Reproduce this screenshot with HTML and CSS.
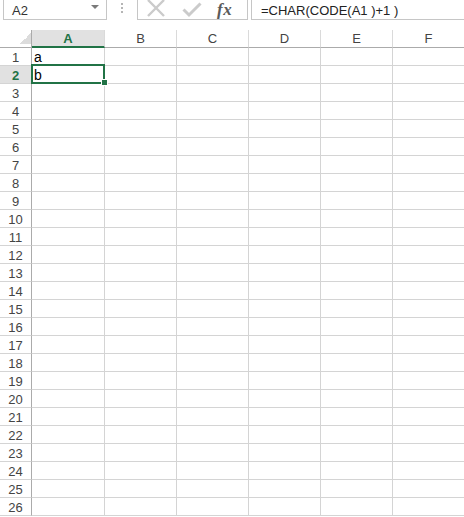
FILE: index.html
```html
<!DOCTYPE html>
<html>
<head>
<meta charset="utf-8">
<link rel="stylesheet" href="styles.css">
</head>
<body>
<div class="toolbar">
  <div class="namebox">
    <span class="name">A2</span>
    <svg class="drop" width="8" height="4" viewBox="0 0 8 4"><path d="M0 0H8L4 4Z" fill="#7a7a7a"/></svg>
  </div>
  <div class="grip"><i></i><i></i><i></i></div>
  <div class="fxbox">
    <svg class="ic-x" width="20" height="18" viewBox="0 0 20 18"><path d="M2 0L18 16M18 0L2 16" stroke="#cbcbcb" stroke-width="2.4" fill="none"/></svg>
    <svg class="ic-ok" width="20" height="18" viewBox="0 0 20 18"><path d="M1.5 8.5L7 14L18.5 2.5" stroke="#cbcbcb" stroke-width="3" fill="none"/></svg>
    <span class="fx">fx</span>
  </div>
  <div class="formula">=CHAR(CODE(A1 )+1 )</div>
</div>
<div class="sheet">
  <div class="corner"></div><div class="ch sel">A</div><div class="ch">B</div><div class="ch">C</div><div class="ch">D</div><div class="ch">E</div><div class="ch">F</div>
  <div class="rh">1</div><div class="c">a</div><div class="c"></div><div class="c"></div><div class="c"></div><div class="c"></div><div class="c"></div>
  <div class="rh sel">2</div><div class="c">b</div><div class="c"></div><div class="c"></div><div class="c"></div><div class="c"></div><div class="c"></div>
  <div class="rh">3</div><div class="c"></div><div class="c"></div><div class="c"></div><div class="c"></div><div class="c"></div><div class="c"></div>
  <div class="rh">4</div><div class="c"></div><div class="c"></div><div class="c"></div><div class="c"></div><div class="c"></div><div class="c"></div>
  <div class="rh">5</div><div class="c"></div><div class="c"></div><div class="c"></div><div class="c"></div><div class="c"></div><div class="c"></div>
  <div class="rh">6</div><div class="c"></div><div class="c"></div><div class="c"></div><div class="c"></div><div class="c"></div><div class="c"></div>
  <div class="rh">7</div><div class="c"></div><div class="c"></div><div class="c"></div><div class="c"></div><div class="c"></div><div class="c"></div>
  <div class="rh">8</div><div class="c"></div><div class="c"></div><div class="c"></div><div class="c"></div><div class="c"></div><div class="c"></div>
  <div class="rh">9</div><div class="c"></div><div class="c"></div><div class="c"></div><div class="c"></div><div class="c"></div><div class="c"></div>
  <div class="rh">10</div><div class="c"></div><div class="c"></div><div class="c"></div><div class="c"></div><div class="c"></div><div class="c"></div>
  <div class="rh">11</div><div class="c"></div><div class="c"></div><div class="c"></div><div class="c"></div><div class="c"></div><div class="c"></div>
  <div class="rh">12</div><div class="c"></div><div class="c"></div><div class="c"></div><div class="c"></div><div class="c"></div><div class="c"></div>
  <div class="rh">13</div><div class="c"></div><div class="c"></div><div class="c"></div><div class="c"></div><div class="c"></div><div class="c"></div>
  <div class="rh">14</div><div class="c"></div><div class="c"></div><div class="c"></div><div class="c"></div><div class="c"></div><div class="c"></div>
  <div class="rh">15</div><div class="c"></div><div class="c"></div><div class="c"></div><div class="c"></div><div class="c"></div><div class="c"></div>
  <div class="rh">16</div><div class="c"></div><div class="c"></div><div class="c"></div><div class="c"></div><div class="c"></div><div class="c"></div>
  <div class="rh">17</div><div class="c"></div><div class="c"></div><div class="c"></div><div class="c"></div><div class="c"></div><div class="c"></div>
  <div class="rh">18</div><div class="c"></div><div class="c"></div><div class="c"></div><div class="c"></div><div class="c"></div><div class="c"></div>
  <div class="rh">19</div><div class="c"></div><div class="c"></div><div class="c"></div><div class="c"></div><div class="c"></div><div class="c"></div>
  <div class="rh">20</div><div class="c"></div><div class="c"></div><div class="c"></div><div class="c"></div><div class="c"></div><div class="c"></div>
  <div class="rh">21</div><div class="c"></div><div class="c"></div><div class="c"></div><div class="c"></div><div class="c"></div><div class="c"></div>
  <div class="rh">22</div><div class="c"></div><div class="c"></div><div class="c"></div><div class="c"></div><div class="c"></div><div class="c"></div>
  <div class="rh">23</div><div class="c"></div><div class="c"></div><div class="c"></div><div class="c"></div><div class="c"></div><div class="c"></div>
  <div class="rh">24</div><div class="c"></div><div class="c"></div><div class="c"></div><div class="c"></div><div class="c"></div><div class="c"></div>
  <div class="rh">25</div><div class="c"></div><div class="c"></div><div class="c"></div><div class="c"></div><div class="c"></div><div class="c"></div>
  <div class="rh">26</div><div class="c"></div><div class="c"></div><div class="c"></div><div class="c"></div><div class="c"></div><div class="c"></div>
  <div class="selection"></div>
  <div class="handle"></div>
</div>
</body>
</html>
```
FILE: styles.css
```css
html, body {
  margin: 0;
  padding: 0;
  background: #fff;
}
body {
  font-family: "Liberation Sans", Arial, sans-serif;
  color: #222;
  width: 464px;
  overflow: hidden;
}
.toolbar {
  height: 30px;
  box-sizing: border-box;
  display: flex;
  align-items: flex-start;
}
.namebox {
  margin-left: 3px;
  margin-top: -1px;
  width: 104px;
  height: 21px;
  box-sizing: border-box;
  border: 1px solid #c6c6c6;
  display: flex;
  align-items: center;
  justify-content: space-between;
  padding: 1px 7px 0 8px;
}
.name {
  font-size: 13px;
  color: #333;
}
.drop {
  margin-top: -7px;
}
.grip {
  width: 30px;
  display: flex;
  flex-direction: column;
  align-items: center;
  gap: 2px;
  padding-top: 3px;
}
.grip i {
  display: block;
  width: 2px;
  height: 2px;
  background: #b5b5b5;
}
.fxbox {
  width: 111px;
  height: 21px;
  margin-top: -1px;
  box-sizing: border-box;
  border: 1px solid #c6c6c6;
  display: flex;
  align-items: flex-start;
}
.ic-x {
  margin-left: 8px;
}
.ic-ok {
  margin-left: 16px;
  margin-top: 1px;
}
.fx {
  margin-left: 15px;
  margin-top: 1px;
  font-family: "Liberation Serif", "Times New Roman", serif;
  font-style: italic;
  font-weight: bold;
  font-size: 17px;
  line-height: 18px;
  color: #5a5a5a;
  letter-spacing: 0.5px;
}
.formula {
  margin-left: 3px;
  margin-top: -1px;
  flex: 1;
  height: 21px;
  box-sizing: border-box;
  border: 1px solid #c6c6c6;
  border-right: none;
  font-size: 13px;
  line-height: 17px;
  padding: 2px 0 0 9px;
  color: #222;
  white-space: pre;
}
.sheet {
  position: relative;
  display: grid;
  grid-template-columns: 32px 73px repeat(5, 72px);
  grid-template-rows: repeat(27, 18px);
  width: 465px;
}
.sheet > div {
  box-sizing: border-box;
  height: 18px;
}
.corner {
  border-right: 1px solid #ababab;
  border-bottom: 1px solid #ababab;
  background: linear-gradient(135deg, transparent 50%, #dcdcdc 50%) no-repeat 20px 3px / 11px 11px;
}
.ch {
  border-right: 1px solid #dadada;
  border-bottom: 1px solid #ababab;
  text-align: center;
  font-size: 13px;
  line-height: 15px;
  padding-top: 1px;
  color: #444;
}
.ch.sel {
  background: #e1e1e1;
  border-bottom: 2px solid #217346;
  color: #217346;
  font-weight: bold;
}
.rh {
  border-right: 1px solid #ababab;
  border-bottom: 1px solid #d4d4d4;
  text-align: center;
  font-size: 13px;
  line-height: 15px;
  padding-top: 2px;
  color: #444;
}
.rh.sel {
  background: #e1e1e1;
  color: #217346;
  font-weight: bold;
}
.c {
  border-right: 1px solid #d4d4d4;
  border-bottom: 1px solid #d4d4d4;
  font-size: 14px;
  line-height: 15px;
  padding: 2px 0 0 2px;
  color: #000;
}
.sheet > .selection {
  position: absolute;
  left: 31px;
  top: 34px;
  width: 74px;
  height: 20px;
  border: 2px solid #217346;
  pointer-events: none;
}
.sheet > .handle {
  position: absolute;
  left: 101px;
  top: 49px;
  width: 7px;
  height: 7px;
  background: #217346;
  border: 1px solid #fff;
}
```
